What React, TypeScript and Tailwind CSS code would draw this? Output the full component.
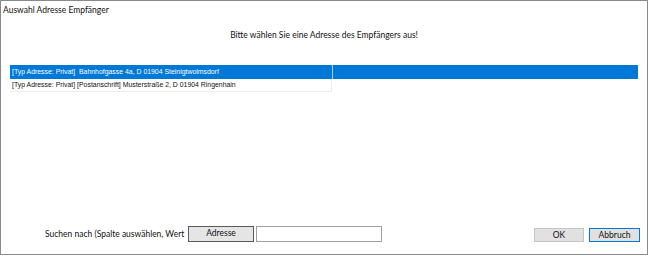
import React from "react";

export default function App() {
  const ui = "font-['Lato',sans-serif]";
  const list = "font-['Liberation_Sans',Arial,sans-serif]";
  return (
    <div className="w-[648px] h-[256px] bg-white">
      <div className={`w-[648px] h-[255px] border border-[#8a8a8a] bg-white flex flex-col text-[#111] ${ui}`}>
        <div className="h-[18px] pl-[2px] flex items-center text-[8.5px] leading-none whitespace-nowrap">Auswahl Adresse Empfänger</div>
        <div className="mt-[10px] h-[12px] flex items-center justify-center text-[8.5px] leading-none whitespace-nowrap">
          Bitte wählen Sie eine Adresse des Empfängers aus!
        </div>
        <div className={`mt-[24px] ml-[9px] flex flex-col ${list} text-[6.9px] leading-none`}>
          <div className="flex h-[14px]">
            <div className="w-[322px] bg-[#0078d7] text-white flex items-center pl-[2px] whitespace-pre">
              [Typ Adresse: Privat]  Bahnhofgasse 4a, D 01904 Steinigtwolmsdorf
            </div>
            <div className="w-[1px] bg-[#a9cdee]" />
            <div className="w-[305px] bg-[#0078d7]" />
          </div>
          <div className="w-[322px] h-[13px] border-r border-b border-[#ececec] flex items-center pl-[2px] whitespace-pre">
            [Typ Adresse: Privat] [Postanschrift] Musterstraße 2, D 01904 Ringenhain
          </div>
        </div>
        <div className="flex-1" />
        <div className="mb-[12px] h-[16px] flex items-stretch text-[8.5px] leading-none">
          <div className="ml-[44px] w-[143px] flex items-center whitespace-nowrap">Suchen nach (Spalte auswählen, Wert</div>
          <div className="w-[66px] border border-[#5a5a5a] bg-[#e5e5e5] flex justify-center pt-[2px]">Adresse</div>
          <div className="ml-[2px] w-[126px] border border-[#a0a0a0] bg-white" />
          <div className="flex-1" />
          <div className="mt-[2px] h-[14px] w-[50px] border border-[#c4c4c4] bg-[#e1e1e1] flex items-center justify-center">OK</div>
          <div className="mt-[2px] ml-[5px] mr-[7px] h-[14px] w-[51px] border border-[#0078d7] bg-[#e1e1e1] flex items-center justify-center">Abbruch</div>
        </div>
      </div>
    </div>
  );
}
